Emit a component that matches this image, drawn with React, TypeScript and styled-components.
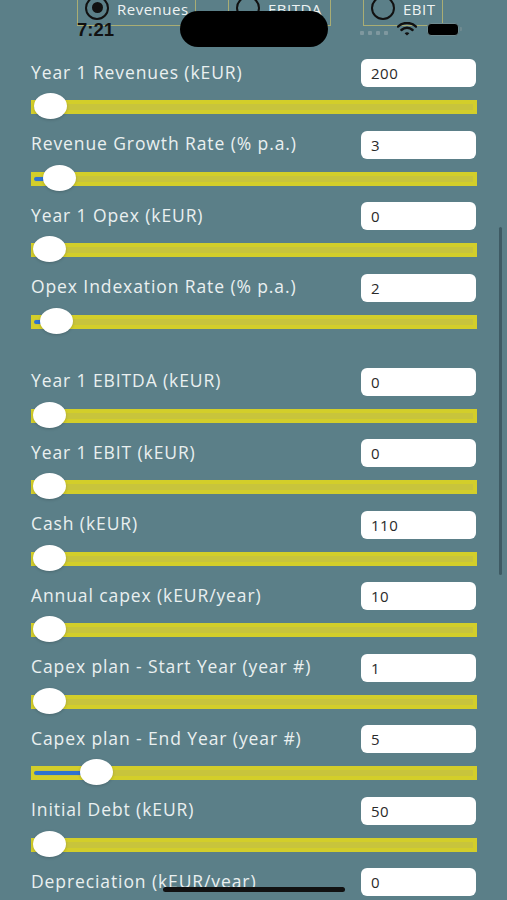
import React from "react";
import styled, { createGlobalStyle } from "styled-components";

const Global = createGlobalStyle`
  html, body { margin: 0; padding: 0; background: #5b7f88; }
  body { width: 507px; height: 900px; overflow: hidden; font-family: "Open Sans", "Liberation Sans", sans-serif; }
  * { box-sizing: border-box; }
`;

const Screen = styled.div`
  position: relative;
  width: 507px;
  height: 900px;
  overflow: hidden;
  background: #5b7f88;
`;

const Content = styled.div`
  display: flex;
  flex-direction: column;
  padding: 0 30px 0 31px;
`;

const SegmentBar = styled.div`
  display: flex;
  gap: 32px;
  margin: -8px 0 0 46px;
`;

const Segment = styled.div<{ $w: number }>`
  width: ${(p) => p.$w}px;
  height: 34px;
  border: 1.5px solid #a9ad74;
  border-top: none;
  display: flex;
  align-items: center;
  gap: 8px;
  padding: 0 7px;
  color: #eef3f3;
  font-size: 15px;
  letter-spacing: 0.5px;
`;

const SegmentText = styled.span`
  line-height: 14px;
`;

const Radio = styled.span<{ $on?: boolean }>`
  width: 24px;
  height: 24px;
  margin-top: -2px;
  border-radius: 50%;
  border: 2.5px solid #111;
  display: flex;
  align-items: center;
  justify-content: center;
  flex: none;
  &::after {
    content: "";
    width: 11px;
    height: 11px;
    border-radius: 50%;
    background: #111;
    display: ${(p) => (p.$on ? "block" : "none")};
  }
`;

const Fields = styled.div`
  display: flex;
  flex-direction: column;
  gap: 16.5px;
  padding-top: 33px;
`;

const Field = styled.div<{ $section?: boolean }>`
  display: flex;
  flex-direction: column;
  gap: 13px;
  margin-top: ${(p) => (p.$section ? "22.5px" : "0")};
`;

const Header = styled.div`
  display: flex;
  align-items: center;
  justify-content: space-between;
  height: 28px;
`;

const Label = styled.span`
  color: #eaf0f0;
  font-size: 17.5px;
  letter-spacing: 0.9px;
  line-height: 24px;
  margin-top: -3px;
  white-space: nowrap;
`;

const NumberBox = styled.div`
  width: 115px;
  height: 28px;
  margin-right: 1px;
  flex: none;
  background: #fff;
  border-radius: 6px;
  padding-left: 10px;
  display: flex;
  align-items: center;
  color: #2a2a2a;
  font-size: 15px;
  letter-spacing: 0.5px;
`;

const Track = styled.div`
  position: relative;
  height: 14px;
  background: #c8c43c;
  border: 4px solid #d3ce2a;
`;

const Fill = styled.div`
  position: absolute;
  left: -1px;
  top: 1px;
  height: 4px;
  border-radius: 2px;
  background: #2f72cf;
`;

const Thumb = styled.div`
  position: absolute;
  top: -11px;
  width: 33px;
  height: 26px;
  border-radius: 50%;
  background: #fff;
  box-shadow: 0 1px 3px rgba(0, 0, 0, 0.18);
`;

const StatusBar = styled.div`
  position: absolute;
  top: 0;
  left: 0;
  right: 0;
  height: 50px;
  pointer-events: none;
`;

const Clock = styled.span`
  position: absolute;
  left: 77px;
  top: 19px;
  font-family: "Liberation Sans", sans-serif;
  font-weight: 700;
  font-size: 18.5px;
  color: #111;
`;

const Island = styled.div`
  position: absolute;
  left: 180px;
  top: 11px;
  width: 148px;
  height: 36px;
  border-radius: 18px;
  background: #000;
`;

const Dots = styled.div`
  position: absolute;
  left: 360px;
  top: 31px;
  display: flex;
  gap: 4px;
  span {
    width: 4px;
    height: 4px;
    border-radius: 1px;
    background: #7f989f;
  }
`;

const Icons = styled.div`
  position: absolute;
  left: 397px;
  top: 22px;
  display: flex;
  align-items: center;
  gap: 10px;
`;

const Battery = styled.div`
  width: 32px;
  height: 13px;
  border-radius: 4px;
  border: 1.5px solid #6f8a90;
  background: #000;
  position: relative;
  &::after {
    content: "";
    position: absolute;
    right: -4px;
    top: 3px;
    width: 2px;
    height: 4px;
    border-radius: 0 1px 1px 0;
    background: #6f8a90;
  }
`;

const ScrollBar = styled.div`
  position: absolute;
  right: 5px;
  top: 227px;
  width: 3px;
  height: 348px;
  border-radius: 2px;
  background: #3e5a63;
`;

const HomeBar = styled.div`
  position: absolute;
  left: 163px;
  bottom: 8px;
  width: 182px;
  height: 5px;
  border-radius: 3px;
  background: #111;
`;

type F = { label: string; value: number; min: number; max: number; section?: boolean };

const fields: F[] = [
  { label: "Year 1 Revenues (kEUR)", value: 200, min: 0, max: 100000 },
  { label: "Revenue Growth Rate (% p.a.)", value: 3, min: 0, max: 120 },
  { label: "Year 1 Opex (kEUR)", value: 0, min: 0, max: 100000 },
  { label: "Opex Indexation Rate (% p.a.)", value: 2, min: 0, max: 120 },
  { label: "Year 1 EBITDA (kEUR)", value: 0, min: 0, max: 100000, section: true },
  { label: "Year 1 EBIT (kEUR)", value: 0, min: 0, max: 100000 },
  { label: "Cash (kEUR)", value: 110, min: 0, max: 100000 },
  { label: "Annual capex (kEUR/year)", value: 10, min: 0, max: 100000 },
  { label: "Capex plan - Start Year (year #)", value: 1, min: 1, max: 35 },
  { label: "Capex plan - End Year (year #)", value: 5, min: 1, max: 35 },
  { label: "Initial Debt (kEUR)", value: 50, min: 0, max: 100000 },
  { label: "Depreciation (kEUR/year)", value: 0, min: 0, max: 100000 },
];

const TRACK_INNER = 438;

function Slider({ value, min, max }: { value: number; min: number; max: number }) {
  const frac = (value - min) / (max - min);
  const left = -2 + frac * (TRACK_INNER - 33 - 4);
  const center = left + 16.5;
  return (
    <Track>
      {frac > 0 && <Fill style={{ width: center + 1 }} />}
      <Thumb style={{ left }} />
    </Track>
  );
}

function Wifi() {
  return (
    <svg width="20" height="14" viewBox="0 0 20 14">
      <path d="M1 4.6 A13 13 0 0 1 19 4.6" stroke="#111" strokeWidth="2.4" fill="none" strokeLinecap="round" />
      <path d="M4.4 8 A8.2 8.2 0 0 1 15.6 8" stroke="#111" strokeWidth="2.4" fill="none" strokeLinecap="round" />
      <path d="M7.6 11.2 A3.6 3.6 0 0 1 12.4 11.2 L10 13.6 Z" fill="#111" />
    </svg>
  );
}

export default function App() {
  return (
    <Screen>
      <Global />
      <Content>
        <SegmentBar>
          <Segment $w={119}>
            <Radio $on />
            <SegmentText>Revenues</SegmentText>
          </Segment>
          <Segment $w={103}>
            <Radio />
            <SegmentText>EBITDA</SegmentText>
          </Segment>
          <Segment $w={80}>
            <Radio />
            <SegmentText>EBIT</SegmentText>
          </Segment>
        </SegmentBar>
        <Fields>
          {fields.map((f) => (
            <Field key={f.label} $section={f.section}>
              <Header>
                <Label>{f.label}</Label>
                <NumberBox>{f.value}</NumberBox>
              </Header>
              <Slider value={f.value} min={f.min} max={f.max} />
            </Field>
          ))}
        </Fields>
      </Content>
      <StatusBar>
        <Clock>7:21</Clock>
        <Island />
        <Dots>
          <span />
          <span />
          <span />
          <span />
        </Dots>
        <Icons>
          <Wifi />
          <Battery />
        </Icons>
      </StatusBar>
      <ScrollBar />
      <HomeBar />
    </Screen>
  );
}
